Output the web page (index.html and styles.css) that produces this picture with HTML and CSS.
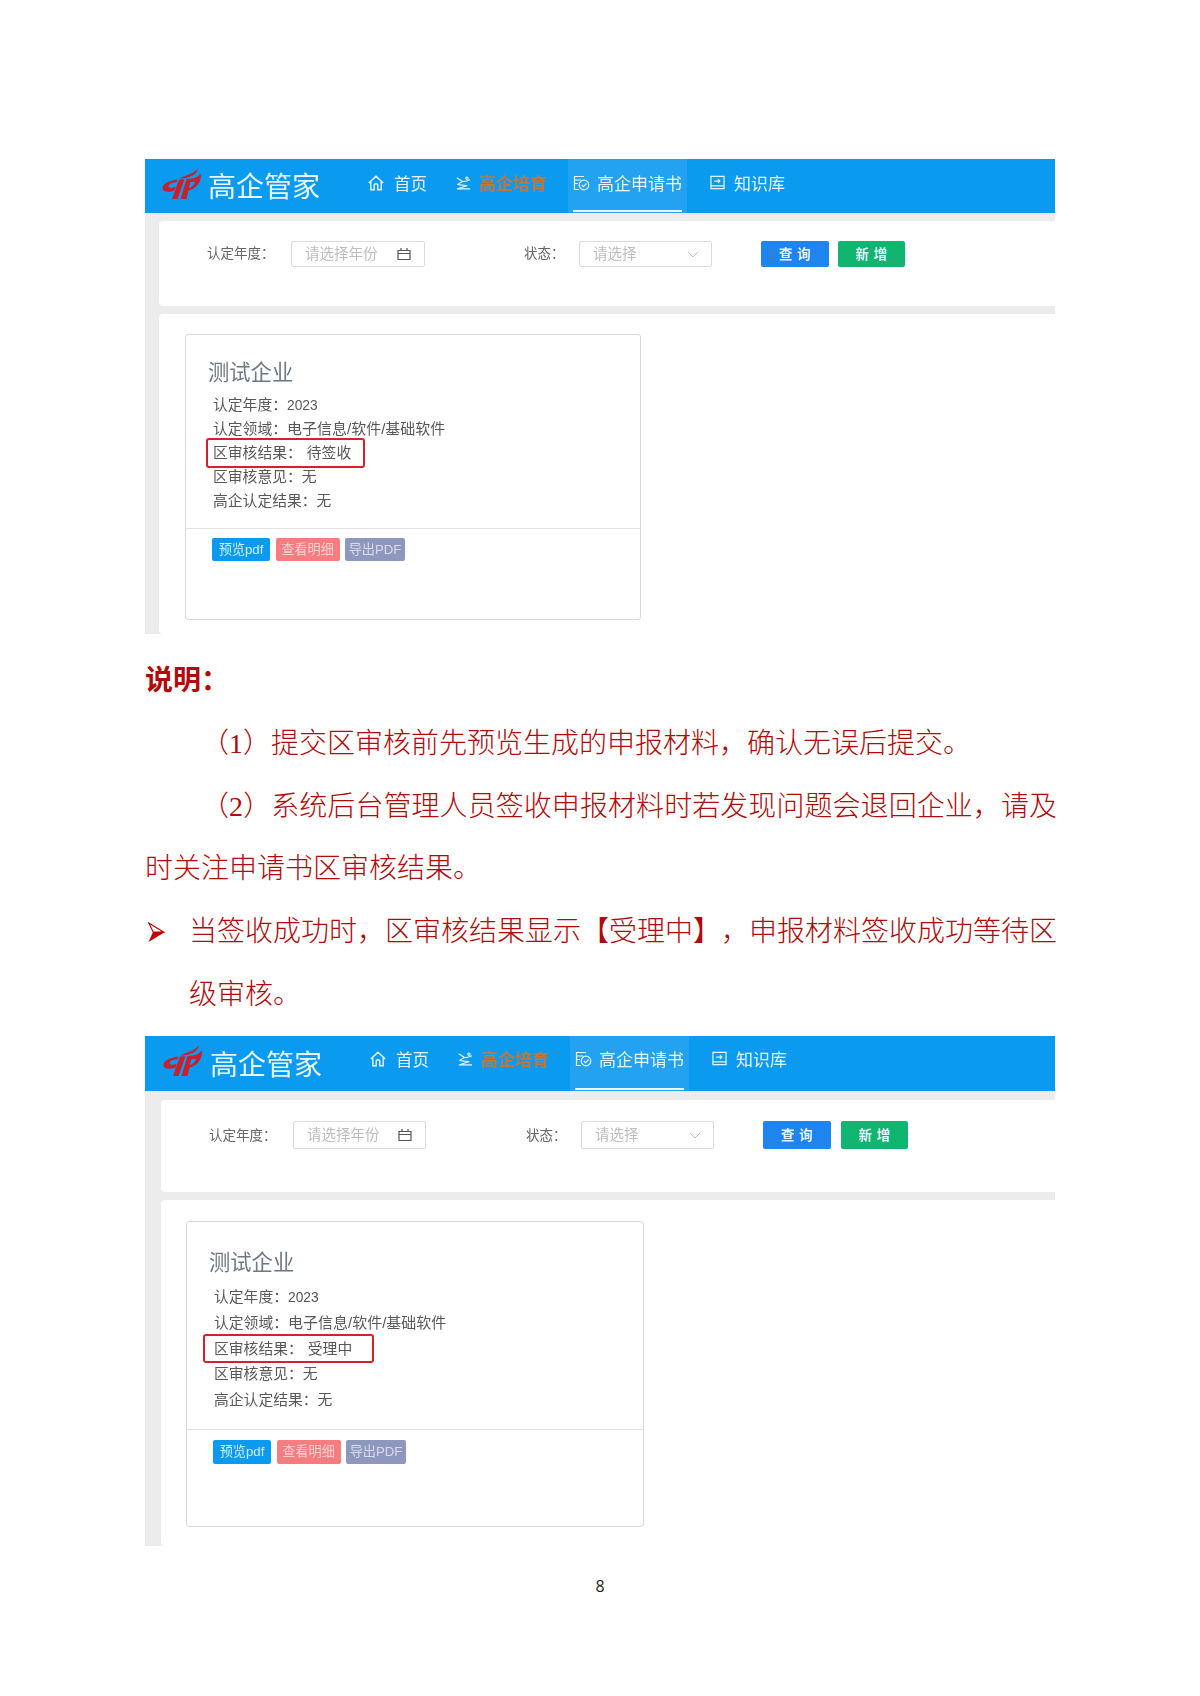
FILE: index.html
```html
<!DOCTYPE html>
<html lang="zh-CN">
<head>
<meta charset="utf-8">
<title>高企管家</title>
<link rel="stylesheet" href="styles.css">
</head>
<body>
<svg class="defs" aria-hidden="true">
  <symbol id="logo" viewBox="0 0 39 31">
    <path d="M36 0C35.500 5 31 8 26 9.500C23 10.300 20 10.500 17.500 10.800C23 6.500 32 6.500 36 0Z"/>
    <path d="M15.500 11.500C7.500 12.500 0 15.500 .5 20.500C1 24.500 8 24.500 12.500 22.500L13.800 18.500C10.500 20.300 6.800 20.300 6.600 18.300C6.400 16 10.500 14.500 14.500 14.200Z"/>
    <path d="M17 11.500L22.500 11.200L15.500 31L10 31Z"/>
    <path d="M24.500 11L30 10.600C33 10 36.500 8.500 38.500 5.500C39.800 10 37.500 20 26.500 22.500L24.500 31L18.500 31ZM28.500 14L26.800 20C30.500 19 32.500 16.500 33 13.700Z"/>
  </symbol>
  <symbol id="home" viewBox="0 0 16 16">
    <path d="M.8 8L8 1.300L15.200 8M2.800 6.500V14.800H6.200V10.500A1.800 1.800 0 0 1 9.800 10.500V14.800H13.200V6.500" fill="none" stroke="currentColor" stroke-width="1.400"/>
  </symbol>
  <symbol id="train" viewBox="0 0 16 14">
    <path d="M10.500 1C12 .2 13.500 1.200 12.700 2.700C11.800 3.800 10 3 10.500 1ZM.8 1.500L7 5.500C9.500 5.500 12.500 4.500 15 3.500M7 5.500C5 6.500 3 7.500 2 8.500C5 9.500 9 9.300 12 9.800C8 11 4 12 1 13.300H15" fill="none" stroke="currentColor" stroke-width="1.200"/>
  </symbol>
  <symbol id="form" viewBox="0 0 17 16">
    <path d="M11 1.500H1.500V14.500H6M1.500 5H8M1.500 8.500H5" fill="none" stroke="currentColor" stroke-width="1.200"/>
    <circle cx="11" cy="10" r="4.800" fill="none" stroke="currentColor" stroke-width="1.200"/>
    <path d="M8.800 10L10.500 11.700L13.500 8.500" fill="none" stroke="currentColor" stroke-width="1.200"/>
  </symbol>
  <symbol id="book" viewBox="0 0 16 16">
    <path d="M1 1.500H15V14.500H1ZM1 11.500H15M4.500 6.500H10.500M8.500 4.500L10.500 6.500L8.500 8.500" fill="none" stroke="currentColor" stroke-width="1.300"/>
  </symbol>
  <symbol id="calendar" viewBox="0 0 14 12">
    <path d="M1 2.500H13V11.500H1ZM1 5.500H13M4 0V3M10 0V3" fill="none" stroke="currentColor" stroke-width="1.200"/>
  </symbol>
  <symbol id="chevron" viewBox="0 0 12 7">
    <path d="M1 1L6 6L11 1" fill="none" stroke="currentColor" stroke-width="1"/>
  </symbol>
</svg>

<main class="page">
  <section class="shot shot-a">
    <header class="top">
      <svg class="logo"><use href="#logo"/></svg>
      <div class="brand">高企管家</div>
      <nav class="nav">
        <a class="nav-item nav-home"><svg class="ic-home"><use href="#home"/></svg>首页</a>
        <a class="nav-item nav-train"><svg class="ic-train"><use href="#train"/></svg><b class="hot">高企培育</b></a>
        <a class="nav-item nav-form"><svg class="ic-form"><use href="#form"/></svg>高企申请书</a>
        <a class="nav-item nav-book"><svg class="ic-book"><use href="#book"/></svg>知识库</a>
      </nav>
    </header>
    <div class="body">
      <div class="panel filter">
        <span class="f-label">认定年度&#65306;</span>
        <div class="field field-year"><span class="ph">请选择年份</span><svg class="ic-cal"><use href="#calendar"/></svg></div>
        <span class="f-label f-status">状态&#65306;</span>
        <div class="field field-state"><span class="ph">请选择</span><svg class="ic-chev"><use href="#chevron"/></svg></div>
        <button class="btn btn-query">查 询</button>
        <button class="btn btn-add">新 增</button>
      </div>
      <div class="panel list">
        <article class="card">
          <div class="card-main">
            <h2 class="card-title">测试企业</h2>
            <p class="row">认定年度&#65306;<span class="year">2023</span></p>
            <p class="row">认定领域&#65306;<span class="num">电子信息/软件/基础软件</span></p>
            <p class="row row-mark">区审核结果&#65306;<span class="val">待签收</span><i class="mark"></i></p>
            <p class="row">区审核意见&#65306;无</p>
            <p class="row">高企认定结果&#65306;无</p>
          </div>
          <div class="card-actions">
            <span class="tag tag-blue">预览pdf</span>
            <span class="tag tag-red">查看明细</span>
            <span class="tag tag-grey">导出PDF</span>
          </div>
        </article>
      </div>
    </div>
  </section>

  <section class="notes">
    <p class="note note-head">说明&#65306;</p>
    <p class="note indent">&#65288;1&#65289;提交区审核前先预览生成的申报材料&#65292;确认无误后提交。</p>
    <p class="note indent">&#65288;2&#65289;系统后台管理人员签收申报材料时若发现问题会退回企业&#65292;请及时关注申请书区审核结果。</p>
    <div class="note bullet">
      <svg class="arrow" viewBox="0 0 17 20"><path d="M.8 1L15.500 10H5.200Z" fill="none" stroke="#c00000" stroke-width="1.200"/><path d="M17 10L.5 20L5 10Z" fill="#c00000"/></svg>
      <p>当签收成功时&#65292;区审核结果显示【受理中】&#65292;申报材料签收成功等待区级审核。</p>
    </div>
  </section>

  <section class="shot shot-b">
    <header class="top">
      <svg class="logo"><use href="#logo"/></svg>
      <div class="brand">高企管家</div>
      <nav class="nav">
        <a class="nav-item nav-home"><svg class="ic-home"><use href="#home"/></svg>首页</a>
        <a class="nav-item nav-train"><svg class="ic-train"><use href="#train"/></svg><b class="hot">高企培育</b></a>
        <a class="nav-item nav-form"><svg class="ic-form"><use href="#form"/></svg>高企申请书</a>
        <a class="nav-item nav-book"><svg class="ic-book"><use href="#book"/></svg>知识库</a>
      </nav>
    </header>
    <div class="body">
      <div class="panel filter">
        <span class="f-label">认定年度&#65306;</span>
        <div class="field field-year"><span class="ph">请选择年份</span><svg class="ic-cal"><use href="#calendar"/></svg></div>
        <span class="f-label f-status">状态&#65306;</span>
        <div class="field field-state"><span class="ph">请选择</span><svg class="ic-chev"><use href="#chevron"/></svg></div>
        <button class="btn btn-query">查 询</button>
        <button class="btn btn-add">新 增</button>
      </div>
      <div class="panel list">
        <article class="card">
          <div class="card-main">
            <h2 class="card-title">测试企业</h2>
            <p class="row">认定年度&#65306;<span class="year">2023</span></p>
            <p class="row">认定领域&#65306;<span class="num">电子信息/软件/基础软件</span></p>
            <p class="row row-mark">区审核结果&#65306;<span class="val">受理中</span><i class="mark"></i></p>
            <p class="row">区审核意见&#65306;无</p>
            <p class="row">高企认定结果&#65306;无</p>
          </div>
          <div class="card-actions">
            <span class="tag tag-blue">预览pdf</span>
            <span class="tag tag-red">查看明细</span>
            <span class="tag tag-grey">导出PDF</span>
          </div>
        </article>
      </div>
    </div>
  </section>

  <footer class="page-no">8</footer>
</main>
</body>
</html>
```

FILE: styles.css
```css
* { box-sizing: border-box; }
html, body { margin: 0; background: #fff; }
body { font-family: "Liberation Sans", "Noto Sans CJK SC", sans-serif; }
.defs { width: 0; height: 0; position: absolute; }
.page { width: 1200px; height: 1696px; padding: 159px 145px 0; }

/* screenshot */
.shot {
  --shot-h: 475px; --top-h: 54px; --pad-l: 14px; --panel-top: 8px; --filter-h: 85px; --gap: 8px;
  --top-l: 17px; --nav-up: 7px; --field-h: 26px; --label-lh: 26px; --filter-l: 48px; --filter-t: 20px; --add-gap: 9px;
  --year-w: 134px; --status-l: 99px;
  --list-t: 20px; --list-l: 26px; --card-w: 456px; --card-h: 286px; --main-h: 194px;
  --title-t: 23px; --rows-t: 5.600px; --row-lh: 23.8px; --act-t: 9px; --tag-h: 23px;
  --mark-l: -7px; --mark-w: 159px; --mark-h: 30px;
  height: var(--shot-h); display: flex; flex-direction: column; filter: blur(.45px);
}
.shot-b {
  --shot-h: 510px; --top-h: 55px; --pad-l: 16px; --panel-top: 9px; --filter-h: 92px; --gap: 8px;
  --top-l: 18px; --nav-up: 10px; --field-h: 28px; --label-lh: 30px; --filter-l: 48px; --filter-t: 21px; --add-gap: 10px;
  --year-w: 133px; --status-l: 100px;
  --list-t: 21px; --list-l: 25px; --card-w: 458px; --card-h: 306px; --main-h: 208px;
  --title-t: 26px; --rows-t: 6.500px; --row-lh: 25.6px; --act-t: 10px; --tag-h: 24px;
  --mark-l: -11px; --mark-w: 171px; --mark-h: 29px;
}
.top { height: var(--top-h); flex: none; background: #0a9bf0; color: #e8f5fd; display: flex; align-items: center; padding-left: var(--top-l); }
.logo { width: 39px; height: 31px; fill: #c8202c; flex: none; margin-top: -6px; }
.brand { font-size: 28px; line-height: 34px; color: #eaf6fe; margin: 4px 0 0 7px; width: 112px; white-space: nowrap; flex: none; }
.shot-b .brand { margin-left: 8px; }
.nav { display: flex; height: 100%; margin-left: 48px; font-size: 16.500px; }
.nav-item { display: flex; align-items: center; white-space: nowrap; padding-bottom: var(--nav-up); position: relative; }
.ic-home { width: 16px; height: 16px; margin-right: 10px; }
.ic-train { width: 15px; height: 14px; margin-right: 8px; }
.ic-form { width: 17px; height: 16px; margin-right: 7px; }
.ic-book { width: 15px; height: 15px; margin-right: 9px; }
.nav-home { width: 88px; }
.nav-train { width: 112px; font-size: 17px; }
.nav-form { width: 119px; padding-left: 5px; background: #22a2f0; font-size: 17px; }
.nav-form::after { content: ""; position: absolute; left: 5px; right: 5px; bottom: 1px; height: 2px; background: #e9f6ff; }
.nav-book { margin-left: 23px; font-size: 17px; }
.hot { color: #c4763a; font-weight: 700; }

.body { flex: 1; min-height: 0; background: #ececec; padding: var(--panel-top) 0 0 var(--pad-l); display: flex; flex-direction: column; gap: var(--gap); }
.panel { background: #fff; border-radius: 4px 0 0 4px; }
.filter { height: var(--filter-h); flex: none; display: flex; align-items: flex-start; padding: var(--filter-t) 0 0 var(--filter-l); }
.f-label { width: 84px; height: var(--field-h); line-height: var(--label-lh); font-size: 13.500px; color: #666; white-space: nowrap; }
.f-status { width: 55px; margin-left: var(--status-l); }
.field { height: var(--field-h); border: 1px solid #dcdcdc; border-radius: 2px; display: flex; align-items: center; justify-content: space-between; font-size: 14.500px; color: #bdbdbd; padding: 0 13px; }
.ph { margin-top: -3px; }
.field-year { width: var(--year-w); }
.field-state { width: 133px; padding-right: 12px; }
.ic-cal { width: 14px; height: 12px; color: #555; }
.ic-chev { width: 12px; height: 7px; color: #c0c0c0; }
.btn { height: var(--field-h); border: 0; border-radius: 2px; color: #e6f4ff; font: 700 13.500px "Liberation Sans", "Noto Sans CJK SC", sans-serif; word-spacing: 1px; padding: 0 0 2px; }
.btn-query { width: 68px; margin-left: 49px; background: #1f85ee; }
.btn-add { width: 67px; margin-left: var(--add-gap); background: #10b66f; }

.list { flex: 1; padding: var(--list-t) 0 0 var(--list-l); }
.card { width: var(--card-w); height: var(--card-h); background: #fff; border: 1px solid #d9d9d9; border-radius: 3px; }
.card-main { height: var(--main-h); border-bottom: 1px solid #e2e2e2; padding-top: var(--title-t); }
.card-title { margin: 0 0 var(--rows-t) 22px; font-size: 21.300px; line-height: 30px; font-weight: 400; color: #6d7885; white-space: nowrap; }
.row { margin: 0 0 0 27px; font-size: 14.800px; line-height: var(--row-lh); color: #585858; white-space: nowrap; position: relative; }
.year { font-size: 13.800px; }
.num { font-size: 15px; }
.val { margin-left: 5px; }
.mark { position: absolute; left: var(--mark-l); top: 50%; width: var(--mark-w); height: var(--mark-h); margin-top: calc(var(--mark-h) / -2 - 1px); border: 2.500px solid #d3232a; border-radius: 3px; }
.card-actions { display: flex; gap: 5.500px; padding: var(--act-t) 0 0 26px; }
.tag { height: var(--tag-h); line-height: var(--tag-h); border-radius: 2px; font-size: 13.200px; text-align: center; white-space: nowrap; }
.tag-blue { width: 58px; background: #0a9bf0; color: #d4efff; }
.tag-red { width: 64px; background: #f67c7f; color: #fbd2d2; }
.tag-grey { width: 60px; background: #8e97bd; color: #d8dcec; }

/* notes */
.notes { margin-right: -2px; padding-top: 16px; height: 402px; color: #b00a0a; font-family: "Liberation Serif", "Noto Sans CJK SC", serif; font-size: 28px; line-height: 62.800px; text-spacing-trim: space-all; }
.note { margin: 0; font-weight: 300; }
.note-head { font-weight: 700; }
.indent { text-indent: 56px; text-align: justify; }
.bullet { display: flex; gap: 24px; align-items: flex-start; }
.bullet p { margin: 0; flex: 1; text-align: justify; }
.arrow { width: 17px; height: 20px; flex: none; margin-top: 21px; margin-left: 3px; }
.page-no { margin-top: 28px; width: 910px; text-align: center; font-family: "Open Sans", sans-serif; font-size: 16px; line-height: 24px; color: #222; }
```
